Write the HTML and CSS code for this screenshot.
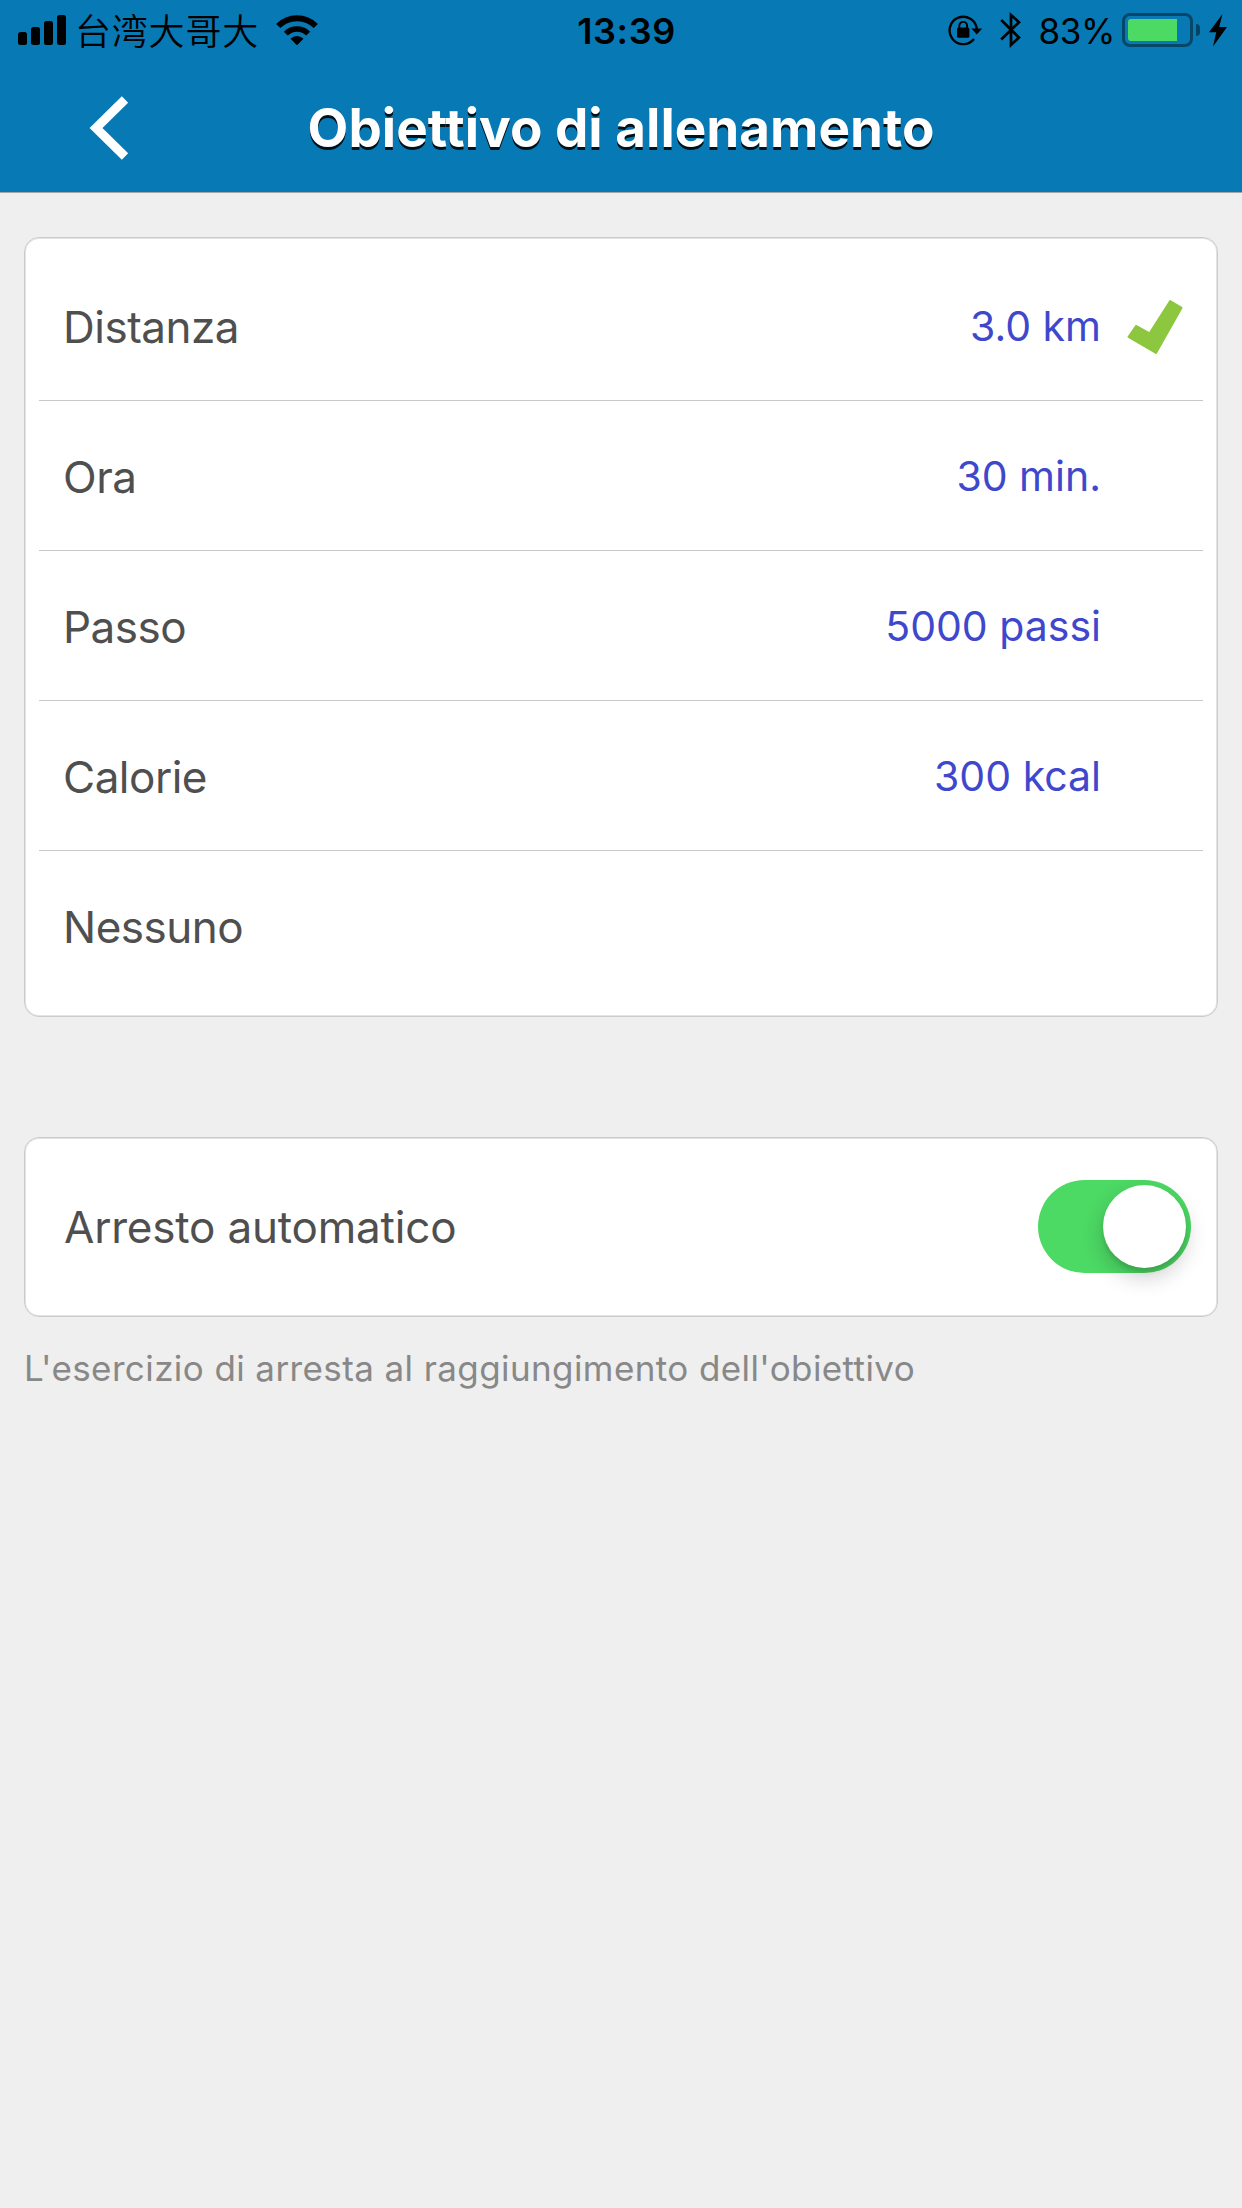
FILE: index.html
```html
<!DOCTYPE html>
<html lang="it">
<head>
  <meta charset="UTF-8">
  <title>Obiettivo di allenamento</title>
  <meta name="viewport" content="width=device-width, initial-scale=1.0">

  <link rel="stylesheet" href="styles.css">
</head>
<body>

  <div class="header">
    <div class="status-bar">
      <div class="status-left">
        <svg class="signal" width="48" height="30" viewBox="0 0 48 30">
          <rect x="0" y="17" width="9" height="13" rx="2.5"/>
          <rect x="13" y="12" width="9" height="18" rx="2.5"/>
          <rect x="26" y="6" width="9" height="24" rx="2.5"/>
          <rect x="39" y="0" width="9" height="30" rx="2.5"/>
        </svg>
        <span class="carrier">台湾大哥大</span>
        <svg class="wifi" width="42" height="30" viewBox="0 0 42 30">
          <path d="M2.2 11 A26.5 26.5 0 0 1 39.8 11" fill="none" stroke="#000" stroke-width="6"/>
          <path d="M9.8 18.6 A15.8 15.8 0 0 1 32.2 18.6" fill="none" stroke="#000" stroke-width="5.6"/>
          <path d="M14.5 23.7 A9.3 9.3 0 0 1 27.5 23.7 L21 30.3 Z"/>
        </svg>
      </div>
      <span class="time">13:39</span>
      <div class="status-right">
        <svg class="lock" width="36" height="32" viewBox="0 0 36 32">
          <path d="M26 25 A13.7 13.7 0 1 1 28.9 15" fill="none" stroke="#000" stroke-width="2.4"/>
          <path d="M23.4 14.6 L34.2 14.6 L28.8 20.6 Z"/>
          <rect x="9" y="13.4" width="12.4" height="10.4" rx="1.5"/>
          <path d="M11.3 14 V11.8 A3.9 3.9 0 0 1 19.1 11.8 V14" fill="none" stroke="#000" stroke-width="1.9"/>
        </svg>
        <svg class="bluetooth" width="22" height="38" viewBox="0 0 22 38">
          <path d="M1.2 9 L19 26.5 L11 34 V4 L19 11.2 L1.2 28.5" fill="none" stroke="#000" stroke-width="2.7"/>
        </svg>
        <span class="percent">83%</span>
        <div class="battery"><div class="battery-level" style="width: 83%"></div></div>
        <div class="battery-tip"></div>
        <svg class="bolt" width="18" height="33" viewBox="0 0 18 33">
          <path d="M13.5 0 L0 18.2 H7.2 L4 32.5 L18 13 H10.2 Z"/>
        </svg>
      </div>
    </div>

    <div class="title-bar">
      <a class="back" href="#" aria-label="Indietro">
        <svg width="40" height="66" viewBox="0 0 40 66">
          <path d="M36 4.5 L7 33 L36 61.5" fill="none" stroke="#fff" stroke-width="9"/>
        </svg>
      </a>
      <h1>Obiettivo di allenamento</h1>
    </div>
  </div>

  <ul class="card goals">
    <li class="row">
      <span class="label">Distanza</span>
      <span class="value">3.0 km</span>
      <svg class="check" width="56" height="54" viewBox="0 0 56 54">
        <path d="M43.2 2 L54.6 8.8 L29 54 L1.5 38 L9 27 L22.6 34.4 Z" stroke-width="2" stroke-linejoin="round"/>
      </svg>
    </li>
    <li class="row">
      <span class="label">Ora</span>
      <span class="value">30 min.</span>
    </li>
    <li class="row">
      <span class="label">Passo</span>
      <span class="value">5000 passi</span>
    </li>
    <li class="row">
      <span class="label">Calorie</span>
      <span class="value">300 kcal</span>
    </li>
    <li class="row">
      <span class="label">Nessuno</span>
    </li>
  </ul>

  <div class="card auto-stop">
    <span class="label">Arresto automatico</span>
    <div class="toggle"><div class="knob"></div></div>
  </div>

  <p class="hint">L'esercizio di arresta al raggiungimento dell'obiettivo</p>

</body>
</html>
```

FILE: styles.css
```css
* {
  box-sizing: border-box;
}

body {
  margin: 0;
  font-family: Inter, "Noto Sans CJK TC", sans-serif;
  background-color: #efefef;
  color: #4f4f4f;
}

.header {
  height: 193px;
  background-color: #077ab6;
  border-bottom: 1px solid #a3a5a8;
}

.status-bar {
  display: flex;
  justify-content: space-between;
  height: 62px;
  padding: 0 15px 0 18px;
  color: #000;
}

.status-left,
.status-right {
  display: flex;
  align-items: center;
  height: 60px;
  flex: 1;
}

.status-right {
  justify-content: flex-end;
}

.carrier {
  margin: -2px 0 0 9px;
  font-family: "Noto Sans CJK TC", sans-serif;
  font-size: 36px;
  font-weight: 350;
  line-height: 60px;
  letter-spacing: 0.8px;
}

.wifi {
  margin-left: 17px;
}

.time {
  padding-left: 8px;
  font-size: 36px;
  font-weight: 600;
  line-height: 62px;
  letter-spacing: 0.6px;
}

.bluetooth {
  margin-left: 16px;
}

.percent {
  margin: 2px 0 0 17px;
  font-size: 35px;
  line-height: 62px;
  letter-spacing: -0.4px;
}

.battery {
  width: 71px;
  height: 34px;
  margin-left: 7px;
  padding: 3px;
  border: 3px solid rgba(0, 0, 0, 0.42);
  border-radius: 8px;
}

.battery-level {
  height: 22px;
  background-color: #4cd964;
  border-radius: 3px 0 0 3px;
}

.battery-tip {
  width: 4px;
  height: 12px;
  margin-left: 3px;
  background-color: rgba(0, 0, 0, 0.45);
  border-radius: 0 4px 4px 0;
}

.bolt {
  margin-left: 9px;
}

.title-bar {
  display: grid;
  grid-template-columns: 140px 1fr 140px;
  align-items: center;
  height: 130px;
}

.back {
  padding-left: 89px;
  line-height: 0;
}

h1 {
  margin: 0;
  padding-top: 1px;
  font-size: 53px;
  font-weight: 700;
  line-height: 130px;
  text-align: center;
  color: #fff;
  text-shadow: 0 3px 0 rgba(0, 0, 0, 0.85);
}

.card {
  margin: 44px 24px 0;
  background-color: #fff;
  border: 1px solid #cbcbcb;
  border-radius: 15px;
  box-shadow: inset 0 0 0 1px #e4e4e4;
}

.goals {
  height: 780px;
  padding: 13px 14px 0;
  list-style: none;
}

.row {
  display: flex;
  align-items: center;
  height: 150px;
  padding: 0 20px 0 24px;
  border-bottom: 1px solid #c8c8c8;
}

.row:last-child {
  border-bottom: none;
}

.label {
  flex: 1;
  font-size: 44px;
  line-height: 60px;
  letter-spacing: -0.5px;
}

.row .label {
  padding-top: 3px;
}

.row:last-child .label {
  padding-top: 2px;
}

.value {
  width: 300px;
  margin-right: 82px;
  padding-top: 1px;
  font-size: 41px;
  text-align: right;
  color: #3f48cc;
}

.check {
  flex: none;
  margin: 1px 0 0 -56px;
  fill: #8dc63f;
  stroke: #8dc63f;
  overflow: visible;
}

.auto-stop {
  display: flex;
  align-items: center;
  height: 180px;
  margin-top: 120px;
  padding: 0 26px 0 39px;
}

.auto-stop .label {
  letter-spacing: -0.2px;
}

.toggle {
  width: 153px;
  height: 93px;
  margin-top: -1px;
  padding: 5px;
  border-radius: 47px;
  background-color: #4cd964;
}

.knob {
  width: 83px;
  height: 83px;
  margin-left: auto;
  border-radius: 50%;
  background-color: #fff;
  box-shadow: 0 9px 22px rgba(0, 0, 0, 0.2), 0 4px 4px rgba(0, 0, 0, 0.1);
}

.hint {
  margin: 29px 24px 0;
  font-size: 35px;
  line-height: 44px;
  letter-spacing: 0.4px;
  color: #888;
}
```
